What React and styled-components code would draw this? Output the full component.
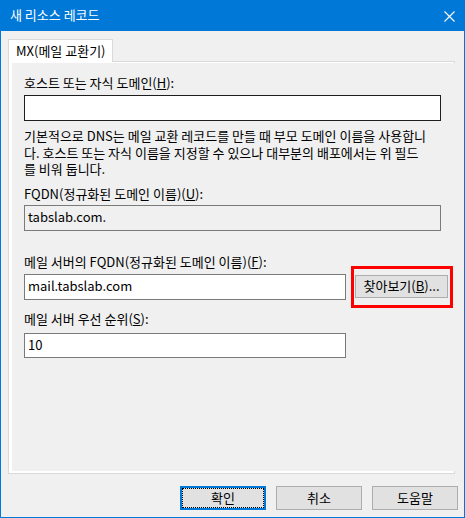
import styled, { createGlobalStyle } from 'styled-components'

const Global = createGlobalStyle`
    html, body {
        margin: 0;
        padding: 0;
        background: #f0f0f0;
    }
    * {
        box-sizing: border-box;
    }
`

const Window = styled.div`
    width: 465px;
    height: 518px;
    border: 1px solid #0078d7;
    background: #f0f0f0;
    display: flex;
    flex-direction: column;
    font-family: "Noto Sans CJK KR", "Noto Sans", sans-serif;
    font-size: 13px;
    color: #000;
`

const TitleBar = styled.div`
    height: 30px;
    background: #0078d7;
    color: #fff;
    display: flex;
    align-items: center;
    justify-content: space-between;
    padding: 0 9px 2px 9px;
    line-height: 16px;
`

const Body = styled.div`
    flex: 1;
    display: flex;
    flex-direction: column;
    padding: 8px 9px 0 7px;
`

const TabStrip = styled.div`
    display: flex;
    position: relative;
    z-index: 1;
    margin-bottom: -1px;
`

const Tab = styled.div`
    width: 105px;
    height: 23px;
    background: #fff;
    border: 1px solid #d9d9d9;
    border-bottom: none;
    padding: 2px 0 0 7px;
    line-height: 18px;
    white-space: nowrap;
`

const Panel = styled.div`
    height: 413px;
    border: 1px solid #d9d9d9;
    background: #fff;
    padding: 1px 2px 2px 3px;
    display: flex;
`

const Page = styled.div`
    flex: 1;
    background: #f0f0f0;
    padding: 12px 11px 0 12px;
    display: flex;
    flex-direction: column;
`

const Label = styled.div`
    line-height: 16px;
    height: 16px;
    margin-top: ${p => p.$top || 0}px;
    white-space: nowrap;
`

const TextBox = styled.div`
    width: ${p => p.$width || 417}px;
    height: ${p => p.$height || 26}px;
    margin-top: ${p => p.$top || 0}px;
    border: 1px solid ${p => p.$dark ? '#1e1e1e' : '#7a7a7a'};
    background: ${p => p.$readonly ? '#f0f0f0' : '#fff'};
    padding: 3px 4px 0 3px;
    line-height: 16px;
    white-space: nowrap;
`

const Help = styled.p`
    margin: 7px 0 0 0;
    line-height: 16.5px;
    white-space: nowrap;
`

const Row = styled.div`
    display: flex;
    align-items: flex-start;
    gap: 9px;
    margin-top: 4px;
`

const Highlight = styled.div`
    position: relative;
    margin-top: 1px;
`

const RedBox = styled.div`
    position: absolute;
    left: -4px;
    right: -5px;
    top: -9px;
    bottom: -10px;
    border: 3px solid #ff0000;
    pointer-events: none;
`

const Button = styled.button`
    width: ${p => p.$width || 86}px;
    height: ${p => p.$height || 24}px;
    background: #e1e1e1;
    border: ${p => p.$default ? '2px solid #0078d7' : '1px solid #adadad'};
    font-family: inherit;
    font-size: 13px;
    color: #000;
    padding: 0;
    line-height: 16px;
    display: flex;
    align-items: center;
    justify-content: center;
    white-space: nowrap;
    outline: ${p => p.$default ? '1px dotted #000' : 'none'};
    outline-offset: -3px;
`

const Footer = styled.div`
    display: flex;
    justify-content: flex-end;
    gap: 10px;
    padding: 12px 6px 7px 0;
`

function CloseIcon() {
    return (
        <svg width="11" height="11" viewBox="0 0 11 11" style={{ display: 'block', marginTop: 2 }}>
            <path d="M0.5 0.5 L10.5 10.5 M10.5 0.5 L0.5 10.5" stroke="#fff" strokeWidth="1.1" />
        </svg>
    )
}

export default function App() {
    return (
        <Window>
            <Global />
            <TitleBar>
                <span>새 리소스 레코드</span>
                <CloseIcon />
            </TitleBar>
            <Body>
                <TabStrip>
                    <Tab>MX(메일 교환기)</Tab>
                </TabStrip>
                <Panel>
                    <Page>
                        <Label>호스트 또는 자식 도메인(<u>H</u>):</Label>
                        <TextBox $top={4} $dark></TextBox>
                        <Help>
                            기본적으로 DNS는 메일 교환 레코드를 만들 때 부모 도메인 이름을 사용합니<br />
                            다. 호스트 또는 자식 이름을 지정할 수 있으나 대부분의 배포에서는 위 필드<br />
                            를 비워 둡니다.
                        </Help>
                        <Label $top={8}>FQDN(정규화된 도메인 이름)(<u>U</u>):</Label>
                        <TextBox $top={3} $readonly>tabslab.com.</TextBox>
                        <Label $top={23}>메일 서버의 FQDN(정규화된 도메인 이름)(<u>F</u>):</Label>
                        <Row>
                            <TextBox $width={322}>mail.tabslab.com</TextBox>
                            <Highlight>
                                <Button $width={93} $height={23}>찾아보기(<u>B</u>)...</Button>
                                <RedBox />
                            </Highlight>
                        </Row>
                        <Label $top={11}>메일 서버 우선 순위(<u>S</u>):</Label>
                        <TextBox $top={6} $width={322} $height={25}>10</TextBox>
                    </Page>
                </Panel>
            </Body>
            <Footer>
                <Button $default>확인</Button>
                <Button>취소</Button>
                <Button>도움말</Button>
            </Footer>
        </Window>
    )
}
